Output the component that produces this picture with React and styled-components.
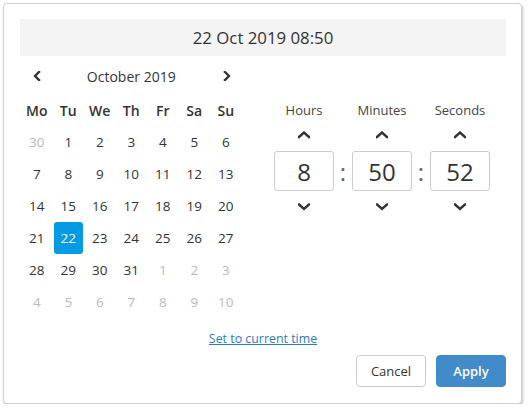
import React from 'react';
import styled, { createGlobalStyle } from 'styled-components';

const Global = createGlobalStyle`
  body {
    margin: 0;
    background: #fff;
    font-family: "Open Sans", "Noto Sans", sans-serif;
    color: #333;
  }
`;

const Card = styled.div`
  box-sizing: border-box;
  width: 519px;
  height: 401px;
  margin: 3px 0 0 3px;
  padding: 15px 15px 15px 16px;
  border: 1px solid #d0d0d0;
  border-radius: 4px;
  background: #fff;
  box-shadow: 1px 2px 3px rgba(0, 0, 0, 0.22);
  display: flex;
  flex-direction: column;
`;

const Header = styled.div`
  height: 37px;
  background: #f4f4f4;
  display: flex;
  align-items: center;
  justify-content: center;
  font-size: 16.8px;
  color: #333;
`;

const Body = styled.div`
  display: flex;
  margin-top: 4px;
`;

const Calendar = styled.div`
  width: 221px;
  margin-left: 1px;
`;

const Grid = styled.div`
  display: grid;
  grid-template-columns: repeat(7, 31.5px);
  grid-auto-rows: 32px;
`;

const Nav = styled(Grid)`
  margin-bottom: 2px;
`;

const NavButton = styled.button`
  border: 0;
  background: none;
  padding: 0 0 0 ${(p) => (p.$next ? 3 : 0)}px;
  display: flex;
  align-items: center;
  justify-content: center;
  color: #333;
  cursor: pointer;
`;

const Month = styled.div`
  grid-column: 2 / 7;
  display: flex;
  align-items: center;
  justify-content: center;
  font-size: 14px;
  color: #333;
`;

const WeekDay = styled.div`
  display: flex;
  align-items: center;
  justify-content: center;
  font-size: 14px;
  font-weight: 600;
  color: #333;
`;

const Day = styled.div`
  display: flex;
  align-items: center;
  justify-content: center;
  margin: 0 1px;
  border-radius: 3px;
  font-size: 13.5px;
  color: ${(p) => (p.$selected ? '#fff' : p.$muted ? '#bbb' : '#333')};
  background: ${(p) => (p.$selected ? '#049be4' : 'transparent')};
`;

const Time = styled.div`
  display: flex;
  margin-left: 32px;
  margin-top: 34px;
`;

const Unit = styled.div`
  width: 60px;
  display: flex;
  flex-direction: column;
  align-items: center;
`;

const UnitLabel = styled.div`
  height: 32px;
  display: flex;
  align-items: center;
  font-size: 13px;
  color: #444;
`;

const Spin = styled.button`
  border: 0;
  background: none;
  padding: 0;
  width: 100%;
  height: ${(p) => p.$h}px;
  display: flex;
  align-items: ${(p) => (p.$up ? 'flex-start' : 'center')};
  justify-content: center;
  padding-top: ${(p) => (p.$up ? 5 : 0)}px;
  box-sizing: border-box;
  color: #333;
  cursor: pointer;
`;

const Field = styled.div`
  box-sizing: border-box;
  width: 60px;
  height: 40px;
  margin-top: 7px;
  border: 1px solid #ccc;
  border-radius: 3px;
  display: flex;
  align-items: center;
  justify-content: center;
  font-size: 24px;
  color: #333;
`;

const Colon = styled.div`
  width: 18px;
  height: 40px;
  margin-top: 57px;
  display: flex;
  align-items: center;
  justify-content: center;
  font-size: 24px;
  color: #666;
`;

const LinkRow = styled.div`
  margin-top: 10px;
  height: 20px;
  display: flex;
  justify-content: center;
  align-items: center;
`;

const Link = styled.a`
  font-size: 12.4px;
  color: #2f7bbf;
  text-decoration: underline;
  cursor: pointer;
`;

const Actions = styled.div`
  margin-top: 7px;
  display: flex;
  justify-content: flex-end;
  gap: 10px;
`;

const Button = styled.button`
  box-sizing: border-box;
  width: 70px;
  height: 32px;
  border-radius: 4px;
  font-family: inherit;
  font-size: 13px;
  font-weight: ${(p) => (p.$primary ? 600 : 400)};
  border: 1px solid ${(p) => (p.$primary ? '#428bca' : '#ccc')};
  background: ${(p) => (p.$primary ? '#428bca' : '#fff')};
  color: ${(p) => (p.$primary ? '#fff' : '#333')};
  cursor: pointer;
`;

const Chevron = ({ dir }) => {
  const pts = {
    left: '6,1 2,5 6,9',
    right: '2,1 6,5 2,9',
    up: '1,6 6,1.5 11,6',
    down: '1,1.5 6,6 11,1.5',
  }[dir];
  const horizontal = dir === 'left' || dir === 'right';
  return (
    <svg width={horizontal ? 8 : 12} height={horizontal ? 10 : 8} viewBox={horizontal ? '0 0 8 10' : '0 0 12 8'}>
      <polyline points={pts} fill="none" stroke="currentColor" strokeWidth="2.4" strokeLinecap="square" />
    </svg>
  );
};

const weekDays = ['Mo', 'Tu', 'We', 'Th', 'Fr', 'Sa', 'Su'];

const days = [
  { d: 30, m: true },
  ...Array.from({ length: 31 }, (_, i) => ({ d: i + 1 })),
  ...Array.from({ length: 10 }, (_, i) => ({ d: i + 1, m: true })),
];

const units = [
  { label: 'Hours', value: '8' },
  { label: 'Minutes', value: '50' },
  { label: 'Seconds', value: '52' },
];

export default function App() {
  return (
    <>
      <Global />
      <Card>
        <Header>22 Oct 2019 08:50</Header>
        <Body>
          <Calendar>
            <Nav>
              <NavButton><Chevron dir="left" /></NavButton>
              <Month>October 2019</Month>
              <NavButton $next><Chevron dir="right" /></NavButton>
            </Nav>
            <Grid>
              {weekDays.map((w) => (
                <WeekDay key={w}>{w}</WeekDay>
              ))}
              {days.map((x, i) => (
                <Day key={i} $muted={x.m} $selected={!x.m && x.d === 22}>
                  {x.d}
                </Day>
              ))}
            </Grid>
          </Calendar>
          <Time>
            {units.map((u, i) => (
              <React.Fragment key={u.label}>
                {i > 0 && <Colon>:</Colon>}
                <Unit>
                  <UnitLabel>{u.label}</UnitLabel>
                  <Spin $up $h={18}><Chevron dir="up" /></Spin>
                  <Field>{u.value}</Field>
                  <Spin $h={32}><Chevron dir="down" /></Spin>
                </Unit>
              </React.Fragment>
            ))}
          </Time>
        </Body>
        <LinkRow>
          <Link>Set to current time</Link>
        </LinkRow>
        <Actions>
          <Button>Cancel</Button>
          <Button $primary>Apply</Button>
        </Actions>
      </Card>
    </>
  );
}
